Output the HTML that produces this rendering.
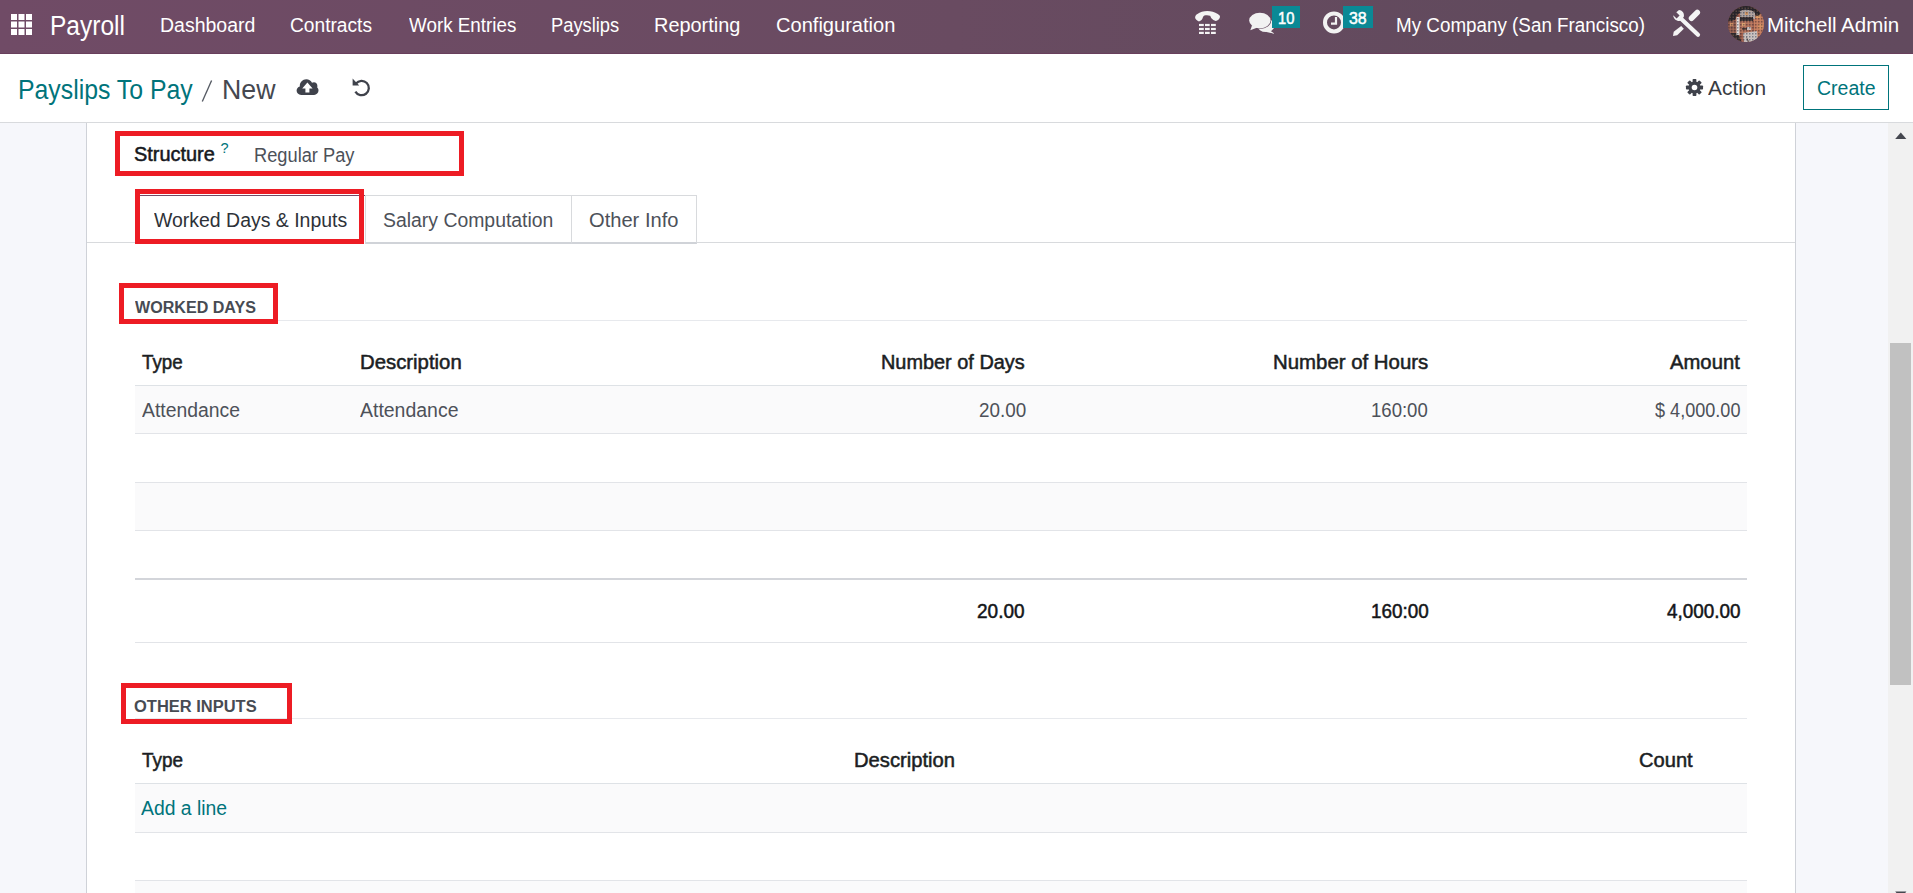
<!DOCTYPE html>
<html><head><meta charset="utf-8"><title>Payslips To Pay / New</title>
<style>
html,body{margin:0;padding:0}
body{width:1913px;height:893px;overflow:hidden;position:relative;background:#fff;font-family:"Liberation Sans",sans-serif}
.a{position:absolute;box-sizing:border-box}
.t{position:absolute;white-space:nowrap;transform-origin:0 0;font-family:"Liberation Sans",sans-serif}
.nav{left:0;top:0;width:1913px;height:54px;background:linear-gradient(to right,#704b66 0%,#694b61 50%,#614a5d 80%,#624a5e 100%)}
.navb{left:0;top:53px;width:1913px;height:1px;background:#683f5c}
.red{border:5px solid #ed1c24}
.hl{height:1px;background:#dee2e6}
.badge{background:#0a8995}
</style></head><body>
<!-- navbar -->
<div class="a nav"></div>
<div class="a navb"></div>
<svg class="a" style="left:11px;top:14px" width="21" height="21" viewBox="0 0 21 21">
<g fill="#fff">
<rect x="0" y="0" width="6" height="6"/><rect x="7.5" y="0" width="6" height="6"/><rect x="15" y="0" width="6" height="6"/>
<rect x="0" y="7.5" width="6" height="6"/><rect x="7.5" y="7.5" width="6" height="6"/><rect x="15" y="7.5" width="6" height="6"/>
<rect x="0" y="15" width="6" height="6"/><rect x="7.5" y="15" width="6" height="6"/><rect x="15" y="15" width="6" height="6"/>
</g></svg>
<!-- phone -->
<svg class="a" style="left:1195px;top:11px" width="26" height="24" viewBox="0 0 26 24">
<g fill="#f4f4f4">
<path d="M4 10.4 C2 9.6 0.2 8 0.1 6.4 C0.3 4.6 1.2 3.6 2.4 3 C5 1.2 8.5 0.1 12.3 0.1 C16 0.1 19.8 1.2 22.8 3.1 C24.2 3.9 25 4.9 25 5.9 C24.6 7.9 22.6 9.5 20.8 10.1 C19.1 9.4 17.4 8.4 16.4 7.2 C15.8 6 15.4 5 15 4.7 C13.5 4 11 4 9.4 4.5 C8.3 5 7.8 6.2 7.6 7.2 C7.3 8.3 6.2 9.6 4 10.4 Z"/>
<rect x="4" y="12.9" width="4.8" height="2.2"/><rect x="10" y="12.9" width="4.7" height="2.2"/><rect x="16" y="12.9" width="4.8" height="2.2"/>
<rect x="4" y="16.9" width="4.8" height="2.2"/><rect x="10" y="16.9" width="4.7" height="2.2"/><rect x="16" y="16.9" width="4.8" height="2.2"/>
<rect x="4" y="20.8" width="4.8" height="2.2"/><rect x="10" y="20.8" width="4.7" height="2.2"/><rect x="16" y="20.8" width="4.8" height="2.2"/>
</g></svg>
<!-- chat -->
<svg class="a" style="left:1248px;top:11px" width="28" height="24" viewBox="0 0 28 24">
<g fill="#f2f2f2">
<ellipse cx="18" cy="14.5" rx="8.6" ry="6.6"/>
<path d="M20 18 L26.6 22.8 L18.5 21 Z"/>
<ellipse cx="11.9" cy="9.6" rx="11.3" ry="8.3" fill="#654a60"/>
<ellipse cx="11.9" cy="9.6" rx="10.7" ry="7.8"/>
<path d="M4 14.5 L2.3 19.2 L9.5 16.6 Z"/>
</g></svg>
<div class="a badge" style="left:1272px;top:6px;width:28px;height:22px"></div>
<!-- clock -->
<svg class="a" style="left:1323px;top:11px" width="23" height="24" viewBox="0 0 23 24">
<circle cx="11" cy="11.4" r="9" fill="none" stroke="#f2f2f2" stroke-width="4"/>
<path d="M13 6 V12.6 H8" fill="none" stroke="#f2f2f2" stroke-width="2.2"/>
</svg>
<div class="a badge" style="left:1343px;top:6px;width:30px;height:22px"></div>
<!-- tools -->
<svg class="a" style="left:1668px;top:4px" width="36" height="34" viewBox="0 0 36 34">
<g fill="#f4f4f4">
<line x1="13.6" y1="15.2" x2="30" y2="30.8" stroke="#f4f4f4" stroke-width="4.2" stroke-linecap="round"/>
<path d="M5.2 11.2 L8.6 14.4 L11.6 11.6 L8.3 8.3 L11 5.9 C14 6 16.5 8.7 15.9 12.4 L13.4 16.6 C9.4 18 5.4 15.3 5.2 11.2 Z"/>
<line x1="29.3" y1="8.5" x2="23.5" y2="14.3" stroke="#f4f4f4" stroke-width="5.5" stroke-linecap="round"/>
<path d="M13.16 21.96 L15.84 24.64 L9.2 31.3 L5 32 L5.7 27.8 Z"/>
</g></svg>
<!-- avatar -->
<svg class="a" style="left:1728px;top:6px" width="37" height="37" viewBox="0 0 37 37">
<defs><clipPath id="cp"><circle cx="18" cy="18.1" r="18"/></clipPath><pattern id="pt" width="3" height="3" patternUnits="userSpaceOnUse"><rect x="0" y="0" width="1.5" height="1.5" fill="#2a2428" opacity="0.45"/><rect x="1.5" y="1.5" width="1.5" height="1.5" fill="#e0a070" opacity="0.25"/></pattern></defs>
<g clip-path="url(#cp)">
<rect width="37" height="37" fill="#9a5a4c"/>
<rect x="26" y="3" width="11" height="28" fill="#c27a5e"/>
<rect x="28" y="8" width="4" height="4" fill="#d99a66"/>
<rect x="30" y="18" width="5" height="5" fill="#d58f62"/>
<path d="M0 0 H37 V6 L29 10 C24 6 16 4 9 9 L7 14 L0 16 Z" fill="#26242a"/>
<rect x="0" y="15" width="8" height="12" fill="#8e5a4e"/>
<rect x="2" y="17" width="3" height="3" fill="#c88a62"/>
<path d="M0 27 L10 27 L14 37 L0 37 Z" fill="#2e2a2e"/>
<path d="M12 5 C16 3 24 3 27 7 L27 13 L12 13 Z" fill="#a9a3a6"/>
<rect x="17" y="6" width="3" height="3" fill="#d39a6a"/>
<rect x="8.5" y="11" width="3" height="18" fill="#e2e2e4"/>
<rect x="12" y="11" width="13" height="4" fill="#2f2a30"/>
<rect x="12" y="15" width="13" height="12" fill="#b0705c"/>
<rect x="14" y="17" width="3" height="3" fill="#d9a070"/>
<rect x="19" y="21" width="4" height="3" fill="#c9c2c4"/>
<rect x="14" y="22" width="5" height="1.8" fill="#3a2e30"/>
<path d="M15 27 L29 25 L30 37 L16 37 Z" fill="#c7c5c9"/>
<path d="M18 30 L22 37 L20 37 Z" fill="#4a4448"/>
<rect width="37" height="37" fill="url(#pt)"/>
</g></svg>
<!-- control panel -->
<svg class="a" style="left:200px;top:78px" width="14" height="26" viewBox="0 0 14 26"><line x1="11.6" y1="2.4" x2="2.3" y2="23.4" stroke="#555a63" stroke-width="1.35"/></svg>
<svg class="a" style="left:296px;top:78px" width="23" height="18" viewBox="0 0 23 18">
<path fill="#3f424b" d="M5.2 17 C2.4 17 0.6 15 0.6 12.6 C0.6 10.4 2 8.9 3.8 8.4 C3.8 8.2 3.8 8 3.8 7.8 C3.8 4.2 6.6 1.2 10.3 1.2 C12.8 1.2 15 2.6 16 4.8 C16.6 4.5 17.2 4.3 17.9 4.3 C19.9 4.3 21.4 5.9 21.4 7.9 C21.4 8.4 21.3 8.9 21.1 9.3 C22 10.1 22.5 11.3 22.5 12.6 C22.5 15 20.5 17 18.1 17 Z"/>
<path fill="#fff" d="M11.4 4.6 L16.6 10.4 L13.4 10.4 L13.4 14.6 L9.4 14.6 L9.4 10.4 L6.2 10.4 Z"/>
</svg>
<svg class="a" style="left:351px;top:77.4px" width="20" height="20" viewBox="0 0 20 20">
<path d="M5 6.5 A7.2 7.2 0 1 1 4.4 14.6" fill="none" stroke="#3f424b" stroke-width="2.3"/>
<path d="M1.6 1.6 L1.6 8.6 L8.2 8.6 Z" fill="#3f424b"/>
</svg>
<svg class="a" style="left:1685px;top:78px" width="19" height="19" viewBox="0 0 19 19">
<g transform="translate(9.5 9.5) scale(0.95)" fill="#3f424b">
<circle r="6.2"/>
<rect x="-2" y="-9" width="4" height="18" rx="0.8"/>
<rect x="-2" y="-9" width="4" height="18" rx="0.8" transform="rotate(45)"/>
<rect x="-2" y="-9" width="4" height="18" rx="0.8" transform="rotate(90)"/>
<rect x="-2" y="-9" width="4" height="18" rx="0.8" transform="rotate(135)"/>
</g>
<circle cx="9.5" cy="9.5" r="2.8" fill="#fff"/>
</svg>
<div class="a" style="left:1803px;top:65px;width:86px;height:45px;border:1px solid #00747b"></div>
<div class="a" style="left:0;top:122px;width:1913px;height:1px;background:#d8dadd"></div>

<!-- content background -->
<div class="a" style="left:0;top:123px;width:86px;height:770px;background:#f6f7fb"></div>
<div class="a" style="left:86px;top:123px;width:1px;height:770px;background:#cfd2d8"></div>
<div class="a" style="left:1795px;top:123px;width:1px;height:770px;background:#cfd2d8"></div>
<div class="a" style="left:1796px;top:123px;width:92px;height:770px;background:#f6f7fb"></div>
<!-- scrollbar -->
<div class="a" style="left:1888px;top:123px;width:25px;height:770px;background:#f1f1f1"></div>
<div class="a" style="left:1890px;top:343px;width:21px;height:342px;background:#c1c1c1"></div>
<svg class="a" style="left:1894px;top:131px" width="14" height="9" viewBox="0 0 14 9"><path d="M1.2 8 L6.8 1.6 L12.4 8 Z" fill="#45474f"/></svg>
<svg class="a" style="left:1894px;top:890px" width="14" height="9" viewBox="0 0 14 9"><path d="M1.2 1.6 L6.8 8 L12.4 1.6 Z" fill="#45474f"/></svg>

<!-- tabs -->
<div class="a" style="left:87px;top:242px;width:1708px;height:1px;background:#d8dadd"></div>
<div class="a" style="left:139px;top:195px;width:227px;height:48px;background:#fff;border:1px solid #d8dadd;border-bottom:none"></div>
<div class="a" style="left:139px;top:195px;width:227px;height:1px;background:#714b67"></div>
<div class="a" style="left:365px;top:195px;width:207px;height:49px;border:1px solid #d8dadd;border-bottom:2px solid #d0d3d8"></div>
<div class="a" style="left:571px;top:195px;width:126px;height:49px;border:1px solid #d8dadd;border-bottom:2px solid #d0d3d8"></div>

<!-- worked days -->
<div class="a" style="left:135px;top:320px;width:1612px;height:1px;background:#e7e9ed"></div>
<div class="a" style="left:135px;top:385px;width:1612px;height:1px;background:#dee2e6"></div>
<div class="a" style="left:135px;top:386px;width:1612px;height:47px;background:#fafafb"></div>
<div class="a" style="left:135px;top:433px;width:1612px;height:1px;background:#e2e4e8"></div>
<div class="a" style="left:135px;top:482px;width:1612px;height:1px;background:#e2e4e8"></div>
<div class="a" style="left:135px;top:483px;width:1612px;height:47px;background:#fafafb"></div>
<div class="a" style="left:135px;top:530px;width:1612px;height:1px;background:#e2e4e8"></div>
<div class="a" style="left:135px;top:578px;width:1612px;height:2px;background:#d3d5da"></div>
<div class="a" style="left:135px;top:642px;width:1612px;height:1px;background:#e2e4e8"></div>

<!-- other inputs -->
<div class="a" style="left:135px;top:718px;width:1612px;height:1px;background:#e7e9ed"></div>
<div class="a" style="left:135px;top:783px;width:1612px;height:1px;background:#dee2e6"></div>
<div class="a" style="left:135px;top:784px;width:1612px;height:48px;background:#fafafb"></div>
<div class="a" style="left:135px;top:832px;width:1612px;height:1px;background:#e2e4e8"></div>
<div class="a" style="left:135px;top:880px;width:1612px;height:1px;background:#e2e4e8"></div>
<div class="a" style="left:135px;top:881px;width:1612px;height:12px;background:#fafafb"></div>

<!-- texts -->
<div class="t" style="left:49.67px;top:12.56px;font-size:26.74px;line-height:26.74px;font-weight:400;color:#fff;transform:scaleX(0.9167)">Payroll</div>
<div class="t" style="left:160.08px;top:14.67px;font-size:20.35px;line-height:20.35px;font-weight:400;color:#fff;transform:scaleX(0.9583)">Dashboard</div>
<div class="t" style="left:290.06px;top:14.67px;font-size:20.35px;line-height:20.35px;font-weight:400;color:#fff;transform:scaleX(0.9419)">Contracts</div>
<div class="t" style="left:409.00px;top:14.67px;font-size:20.35px;line-height:20.35px;font-weight:400;color:#fff;transform:scaleX(0.9250)">Work Entries</div>
<div class="t" style="left:551.40px;top:14.67px;font-size:20.35px;line-height:20.35px;font-weight:400;color:#fff;transform:scaleX(0.9000)">Payslips</div>
<div class="t" style="left:654.44px;top:14.67px;font-size:20.35px;line-height:20.35px;font-weight:400;color:#fff;transform:scaleX(0.9788)">Reporting</div>
<div class="t" style="left:776.01px;top:14.67px;font-size:20.35px;line-height:20.35px;font-weight:400;color:#fff;transform:scaleX(0.9866)">Configuration</div>
<div class="t" style="left:1395.85px;top:15.17px;font-size:20.35px;line-height:20.35px;font-weight:400;color:#fff;transform:scaleX(0.9252)">My Company (San Francisco)</div>
<div class="t" style="left:1766.98px;top:15.17px;font-size:20.35px;line-height:20.35px;font-weight:400;color:#fff;transform:scaleX(1.0078)">Mitchell Admin</div>
<div class="t" style="left:1278.08px;top:11.45px;font-size:16.00px;line-height:16.00px;font-weight:400;color:#fff;transform:scaleX(0.9176);-webkit-text-stroke:0.5px #fff">10</div>
<div class="t" style="left:1349.20px;top:11.45px;font-size:16.00px;line-height:16.00px;font-weight:400;color:#fff;transform:scaleX(0.9944);-webkit-text-stroke:0.5px #fff">38</div>
<div class="t" style="left:17.59px;top:75.72px;font-size:27.50px;line-height:27.50px;font-weight:400;color:#00747b;transform:scaleX(0.9026)">Payslips To Pay</div>
<div class="t" style="left:221.56px;top:75.72px;font-size:27.50px;line-height:27.50px;font-weight:400;color:#454850;transform:scaleX(0.9717)">New</div>
<div class="t" style="left:1707.50px;top:77.77px;font-size:20.35px;line-height:20.35px;font-weight:400;color:#393c43;transform:scaleX(1.0273)">Action</div>
<div class="t" style="left:1817.04px;top:77.77px;font-size:20.35px;line-height:20.35px;font-weight:400;color:#00747b;transform:scaleX(0.9576)">Create</div>
<div class="t" style="left:134.18px;top:144.69px;font-size:19.50px;line-height:19.50px;font-weight:400;color:#16181d;transform:scaleX(1.0218);-webkit-text-stroke:0.5px #16181d">Structure</div>
<div class="t" style="left:254.13px;top:146.49px;font-size:19.50px;line-height:19.50px;font-weight:400;color:#4d5159;transform:scaleX(0.9362)">Regular Pay</div>
<div class="t" style="left:154.00px;top:209.77px;font-size:20.00px;line-height:20.00px;font-weight:400;color:#2e3238;transform:scaleX(0.9727)">Worked Days &amp; Inputs</div>
<div class="t" style="left:383.23px;top:209.87px;font-size:20.00px;line-height:20.00px;font-weight:400;color:#4d5159;transform:scaleX(0.9701)">Salary Computation</div>
<div class="t" style="left:589.19px;top:209.87px;font-size:20.00px;line-height:20.00px;font-weight:400;color:#4d5159;transform:scaleX(1.0057)">Other Info</div>
<div class="t" style="left:134.80px;top:299.14px;font-size:17.20px;line-height:17.20px;font-weight:700;color:#474b53;transform:scaleX(0.9357)">WORKED DAYS</div>
<div class="t" style="left:141.90px;top:353.09px;font-size:19.50px;line-height:19.50px;font-weight:400;color:#1b1e23;transform:scaleX(0.9643);-webkit-text-stroke:0.5px #1b1e23">Type</div>
<div class="t" style="left:360.16px;top:353.09px;font-size:19.50px;line-height:19.50px;font-weight:400;color:#1b1e23;transform:scaleX(1.0427);-webkit-text-stroke:0.5px #1b1e23">Description</div>
<div class="t" style="left:880.78px;top:353.09px;font-size:19.50px;line-height:19.50px;font-weight:400;color:#1b1e23;transform:scaleX(1.0200);-webkit-text-stroke:0.5px #1b1e23">Number of Days</div>
<div class="t" style="left:1272.85px;top:353.09px;font-size:19.50px;line-height:19.50px;font-weight:400;color:#1b1e23;transform:scaleX(1.0456);-webkit-text-stroke:0.5px #1b1e23">Number of Hours</div>
<div class="t" style="left:1670.00px;top:353.09px;font-size:19.50px;line-height:19.50px;font-weight:400;color:#1b1e23;transform:scaleX(1.0382);-webkit-text-stroke:0.5px #1b1e23">Amount</div>
<div class="t" style="left:141.60px;top:401.19px;font-size:19.50px;line-height:19.50px;font-weight:400;color:#4d5159;transform:scaleX(0.9929)">Attendance</div>
<div class="t" style="left:360.20px;top:401.19px;font-size:19.50px;line-height:19.50px;font-weight:400;color:#4d5159;transform:scaleX(0.9980)">Attendance</div>
<div class="t" style="left:978.83px;top:401.19px;font-size:19.50px;line-height:19.50px;font-weight:400;color:#4d5159;transform:scaleX(0.9681)">20.00</div>
<div class="t" style="left:1371.45px;top:401.19px;font-size:19.50px;line-height:19.50px;font-weight:400;color:#4d5159;transform:scaleX(0.9517)">160:00</div>
<div class="t" style="left:1654.90px;top:401.19px;font-size:19.50px;line-height:19.50px;font-weight:400;color:#4d5159;transform:scaleX(0.9272)">$ 4,000.00</div>
<div class="t" style="left:977.42px;top:602.09px;font-size:19.50px;line-height:19.50px;font-weight:400;color:#141619;transform:scaleX(0.9750);-webkit-text-stroke:0.5px #141619">20.00</div>
<div class="t" style="left:1370.73px;top:602.09px;font-size:19.50px;line-height:19.50px;font-weight:400;color:#141619;transform:scaleX(0.9690);-webkit-text-stroke:0.5px #141619">160:00</div>
<div class="t" style="left:1667.00px;top:602.09px;font-size:19.50px;line-height:19.50px;font-weight:400;color:#141619;transform:scaleX(0.9697);-webkit-text-stroke:0.5px #141619">4,000.00</div>
<div class="t" style="left:133.74px;top:698.04px;font-size:17.20px;line-height:17.20px;font-weight:700;color:#474b53;transform:scaleX(0.9587)">OTHER INPUTS</div>
<div class="t" style="left:141.90px;top:751.09px;font-size:19.50px;line-height:19.50px;font-weight:400;color:#1b1e23;transform:scaleX(0.9690);-webkit-text-stroke:0.5px #1b1e23">Type</div>
<div class="t" style="left:853.76px;top:751.19px;font-size:19.50px;line-height:19.50px;font-weight:400;color:#1b1e23;transform:scaleX(1.0354);-webkit-text-stroke:0.5px #1b1e23">Description</div>
<div class="t" style="left:1638.67px;top:751.19px;font-size:19.50px;line-height:19.50px;font-weight:400;color:#1b1e23;transform:scaleX(1.0314);-webkit-text-stroke:0.5px #1b1e23">Count</div>
<div class="t" style="left:141.40px;top:798.59px;font-size:19.50px;line-height:19.50px;font-weight:400;color:#00747b;transform:scaleX(0.9930)">Add a line</div>
<div class="t" style="left:220.5px;top:141px;font-size:14.5px;line-height:15px;color:#00747b">?</div>

<!-- red annotation boxes -->
<div class="a red" style="left:115px;top:131px;width:349px;height:45px"></div>
<div class="a red" style="left:135px;top:189px;width:229px;height:55px"></div>
<div class="a red" style="left:119px;top:283px;width:159px;height:41px"></div>
<div class="a red" style="left:121px;top:683px;width:171px;height:41px"></div>
</body></html>
